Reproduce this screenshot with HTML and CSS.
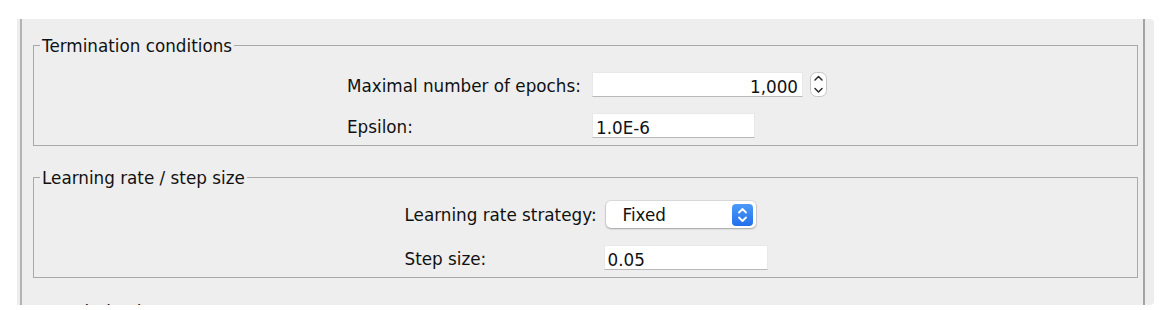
FILE: index.html
```html
<!DOCTYPE html>
<html lang="en">
<head>
  <meta charset="UTF-8" />
  <title>Training settings</title>
  <link rel="stylesheet" href="styles.css">
</head>
<body>
  <div class="window">
    <div class="pane">
      <fieldset class="group">
        <legend>Termination conditions</legend>
        <div class="form form-termination">
          <label class="label" for="epochs">Maximal number of epochs:</label>
          <div class="spin-field">
            <input id="epochs" class="field field-epochs" type="text" value="1,000">
            <span class="spinner">
              <svg width="17" height="25" viewBox="0 0 17 25">
                <rect x="0.5" y="0.5" width="16" height="24" rx="6" fill="#fff" stroke="#c6c6c6" />
                <path d="M5 8 L8.5 4.5 L12 8" fill="none" stroke="#2b2b2b" stroke-width="1.5" stroke-linecap="round" stroke-linejoin="round" />
                <path d="M5 16.5 L8.5 20 L12 16.5" fill="none" stroke="#2b2b2b" stroke-width="1.5" stroke-linecap="round" stroke-linejoin="round" />
              </svg>
            </span>
          </div>
          <label class="label" for="epsilon">Epsilon:</label>
          <input id="epsilon" class="field field-epsilon" type="text" value="1.0E-6">
        </div>
      </fieldset>

      <fieldset class="group">
        <legend>Learning rate / step size</legend>
        <div class="form form-learning">
          <label class="label">Learning rate strategy:</label>
          <div class="select">
            <span class="select-value">Fixed</span>
            <span class="select-arrows">
              <svg width="21" height="22" viewBox="0 0 21 22">
                <path d="M7 8.5 L10.5 5 L14 8.5" fill="none" stroke="#fff" stroke-width="1.8" stroke-linecap="round" stroke-linejoin="round" />
                <path d="M7 13.5 L10.5 17 L14 13.5" fill="none" stroke="#fff" stroke-width="1.8" stroke-linecap="round" stroke-linejoin="round" />
              </svg>
            </span>
          </div>
          <label class="label" for="step">Step size:</label>
          <input id="step" class="field field-step" type="text" value="0.05">
        </div>
      </fieldset>

      <fieldset class="group group-last">
        <legend>Regularization</legend>
        <div class="form"></div>
      </fieldset>
    </div>
  </div>
</body>
</html>
```

FILE: styles.css
```css
html, body {
  margin: 0;
  padding: 0;
  background-color: #ffffff;
  font-family: 'DejaVu Sans', 'Liberation Sans', sans-serif;
  font-size: 16.8px;
  color: #111111;
}
.window {
  margin: 19px 0 0 17px;
  width: 1137px;
  height: 286px;
  background-color: #ededed;
  border-radius: 0 4px 4px 0;
  overflow: hidden;
}
.pane {
  box-sizing: border-box;
  margin-left: 3px;
  width: 1125px;
  height: 100%;
  padding-top: 14px;
  border-left: 2px solid #b3b3b3;
  border-right: 2px solid #a4a4a4;
  background-color: #eeeeee;
}
.group {
  margin: 0 5px 0 11px;
  padding: 0;
  min-width: 0;
  border: 1px solid #a9a9a9;
}
.group + .group {
  margin-top: 19px;
}
.group.group-last {
  margin-top: 21px;
}
.group legend {
  margin-left: 6px;
  padding: 4px 2px 1px;
  line-height: 19px;
}
.form {
  display: grid;
  justify-content: center;
  align-items: start;
}
.form-termination {
  grid-template-columns: 245px 235px;
  row-gap: 16px;
  padding: 15px 0 7px 3px;
}
.form-learning {
  grid-template-columns: 199px 164px;
  row-gap: 17px;
  padding: 12px 0 7px 1px;
}
.label {
  padding-top: 5px;
  line-height: 19px;
  white-space: nowrap;
}
.field {
  box-sizing: border-box;
  height: 25px;
  margin: 0;
  padding: 4px 4px 0 3px;
  font: inherit;
  line-height: 19px;
  color: #111111;
  background-color: #ffffff;
  border: 1px solid #e8e8e8;
  border-bottom-color: #b9b9b9;
  border-radius: 0;
  outline: none;
}
.spin-field {
  display: flex;
  align-items: flex-start;
  gap: 7px;
}
.field-epochs {
  width: 211px;
  text-align: right;
}
.field-epsilon {
  width: 163px;
}
.field-step {
  width: 164px;
}
.spinner {
  display: block;
  width: 17px;
  height: 25px;
}
.spinner svg,
.select-arrows svg {
  display: block;
}
.select {
  box-sizing: border-box;
  display: flex;
  justify-content: space-between;
  align-items: center;
  width: 150px;
  height: 27px;
  margin-left: 2px;
  padding: 0 3px 0 17px;
  background-color: #ffffff;
  border-radius: 5px;
  box-shadow: 0 0 0 1px #00000014, 0 1px 2px #00000040;
}
.select-value {
  padding-top: 2px;
  line-height: 19px;
}
.select-arrows {
  width: 21px;
  height: 22px;
  border-radius: 4px;
  background: linear-gradient(#4c9bf9, #2270ea);
}
```
